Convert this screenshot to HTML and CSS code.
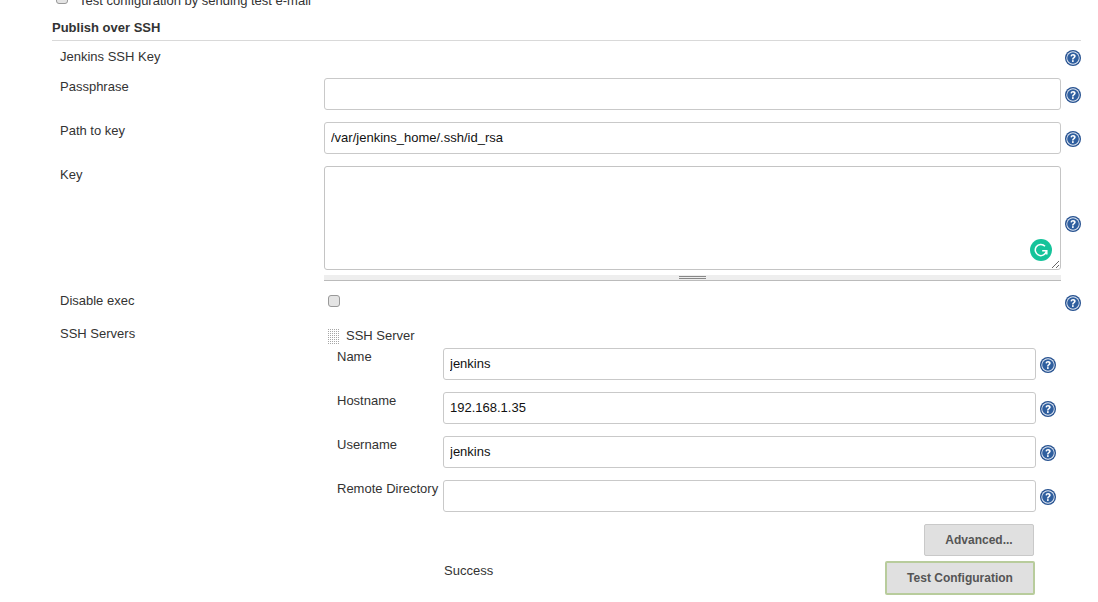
FILE: index.html
```html
<!DOCTYPE html>
<html lang="en">
<head>
<meta charset="utf-8">
<title>Publish over SSH</title>
<link rel="stylesheet" href="styles.css">
</head>
<body>
<svg class="defs" width="0" height="0" aria-hidden="true">
  <symbol id="help" viewBox="0 0 16 16">
    <circle cx="8" cy="8" r="8" fill="#24508f"/>
    <circle cx="8" cy="8" r="6.7" fill="#e4eaf4"/>
    <circle cx="8" cy="8" r="5.8" fill="#2f5f9f"/>
    <path d="M5.5 6.3C5.6 4.7 6.7 3.9 8.1 3.9c1.5 0 2.6.9 2.6 2.2 0 1-.6 1.6-1.3 2.1-.6.4-.8.7-.8 1.4H7c0-1.1.3-1.7 1-2.2.6-.4.9-.7.9-1.2 0-.5-.4-.8-.9-.8-.6 0-1 .4-1 1z" fill="#fff"/>
    <rect x="7" y="10.2" width="1.7" height="1.7" fill="#fff"/>
  </symbol>
</svg>
<main class="page">
  <div class="clipped">
    <span class="checkbox"></span>
    <span class="clipped-text">Test configuration by sending test e-mail</span>
  </div>
  <h2 class="section">Publish over SSH</h2>

  <div class="row row-key">
    <div class="label">Jenkins SSH Key</div>
    <div class="field"></div>
    <svg class="help"><use href="#help"/></svg>
  </div>
  <div class="row row-input">
    <div class="label">Passphrase</div>
    <div class="field"><input class="input" type="text"></div>
    <svg class="help"><use href="#help"/></svg>
  </div>
  <div class="row row-input">
    <div class="label">Path to key</div>
    <div class="field"><input class="input" type="text" value="/var/jenkins_home/.ssh/id_rsa"></div>
    <svg class="help"><use href="#help"/></svg>
  </div>
  <div class="row row-area">
    <div class="label">Key</div>
    <div class="field area-wrap">
      <textarea class="area"></textarea>
      <div class="grippie"><span class="grip-lines"></span></div>
      <svg class="grammarly" viewBox="0 0 22 22" aria-hidden="true">
        <circle cx="11" cy="11" r="11" fill="#15c39a"/>
        <path d="M15 7.2A5.6 5.6 0 1 0 16.4 12" fill="none" stroke="#fff" stroke-width="1.5"/>
        <path d="M12.2 11.8H16.8V15.6" fill="none" stroke="#fff" stroke-width="1.5"/>
      </svg>
    </div>
    <svg class="help"><use href="#help"/></svg>
  </div>
  <div class="row row-check">
    <div class="label">Disable exec</div>
    <div class="field"><span class="checkbox"></span></div>
    <svg class="help"><use href="#help"/></svg>
  </div>
  <div class="row row-servers">
    <div class="label">SSH Servers</div>
    <div class="field">
      <div class="server-head"><span class="handle"></span><span>SSH Server</span></div>
      <div class="sub">
        <div class="subrow"><div class="sublabel">Name</div><input class="input" type="text" value="jenkins"><svg class="help"><use href="#help"/></svg></div>
        <div class="subrow"><div class="sublabel">Hostname</div><input class="input" type="text" value="192.168.1.35"><svg class="help"><use href="#help"/></svg></div>
        <div class="subrow"><div class="sublabel">Username</div><input class="input" type="text" value="jenkins"><svg class="help"><use href="#help"/></svg></div>
        <div class="subrow"><div class="sublabel">Remote Directory</div><input class="input" type="text"><svg class="help"><use href="#help"/></svg></div>
      </div>
      <div class="adv-row"><button class="btn btn-adv" type="button">Advanced...</button></div>
      <div class="test-row">
        <span class="success">Success</span>
        <button class="btn btn-test" type="button">Test Configuration</button>
      </div>
    </div>
  </div>
</main>
</body>
</html>
```

FILE: styles.css
```css
* { box-sizing: border-box; }
html, body { margin: 0; padding: 0; height: 602px; overflow: hidden; background: #fff; }
body { font-family: "Liberation Sans", Arial, sans-serif; font-size: 13px; color: #333; line-height: 16px; }
.defs { position: absolute; }
.page { width: 1029px; margin-left: 52px; display: flex; flex-direction: column; }

.clipped { height: 26px; margin-top: -7px; padding-left: 4px; display: flex; gap: 11px; align-items: flex-start; }
.clipped-text { line-height: 16px; }

.section { margin: 0; height: 22px; border-bottom: 1px solid #d9d9d9; font-size: 13px; font-weight: 700; line-height: 18px; color: #333; }

.row { display: grid; grid-template-columns: 264px 737px 20px; padding-left: 8px; }
.row > .help { justify-self: end; }
.row-key { height: 37px; padding-top: 8px; }
.row-key > .help { margin-top: 1px; }
.row-input { height: 44px; }
.row-input .label, .row-area .label, .row-servers .label { padding-top: 1px; }
.row-input > .help { margin-top: 9px; }
.row-area { height: 126px; }
.row-area > .help { margin-top: 50px; }
.row-check { height: 33px; padding-top: 1px; }
.row-check > .help { margin-top: 2px; }
.row-servers { height: 270px; }

.help { width: 16px; height: 16px; display: block; }
.input { display: block; width: 100%; height: 32px; padding: 0 6px 2px; border: 1px solid #c9c9c9; border-radius: 3px; background: #fff; font-family: inherit; font-size: 13px; color: #111; outline: none; }

.area-wrap { position: relative; }
.area { display: block; width: 100%; height: 104px; border: 1px solid #c4c4c4; border-radius: 3px; background: #fff; resize: vertical; margin: 0; padding: 6px; outline: none; }
.grippie { height: 6px; margin-top: 5px; background: #eee; border-bottom: 1px solid #bbb; display: flex; justify-content: center; }
.grip-lines { width: 27px; height: 3px; margin-top: 1px; border-top: 1px solid #888; border-bottom: 1px solid #888; }
.grammarly { position: absolute; left: 706px; top: 73px; width: 22px; height: 22px; }

.checkbox { display: block; width: 12px; height: 12px; margin: 2px 0 0 4px; background: #e4e4e4; border: 1px solid #999; border-radius: 3px; flex: none; }
.clipped .checkbox { margin: -1px 0 0 0; }

.server-head { height: 24px; display: flex; align-items: center; gap: 7px; margin-left: 3px; margin-top: -1px; }
.handle { width: 12px; height: 16px; background: linear-gradient(to right, #fff 1px, transparent 1px) 0 0 / 2px 2px, linear-gradient(#fff 1px, #a6a6a6 1px) 0 0 / 2px 2px; }
.sub { margin-left: 13px; }
.subrow { display: grid; grid-template-columns: 106px 593px 20px; height: 44px; }
.subrow > .help { justify-self: end; margin-top: 9px; }
.sublabel { white-space: nowrap; padding-top: 1px; }

.adv-row { display: flex; justify-content: flex-end; padding-right: 27px; }
.btn { font-family: inherit; font-size: 12px; font-weight: 700; color: #555; background: #e0e0e0; border-radius: 2px; padding: 0; }
.btn-adv { width: 110px; height: 32px; border: 1px solid #c9c9c9; }
.test-row { display: flex; justify-content: space-between; align-items: flex-start; margin-top: 5px; padding-left: 120px; padding-right: 26px; }
.success { margin-top: 2px; }
.btn-test { width: 150px; height: 34px; border: 2px solid #b8cc9c; }
```
